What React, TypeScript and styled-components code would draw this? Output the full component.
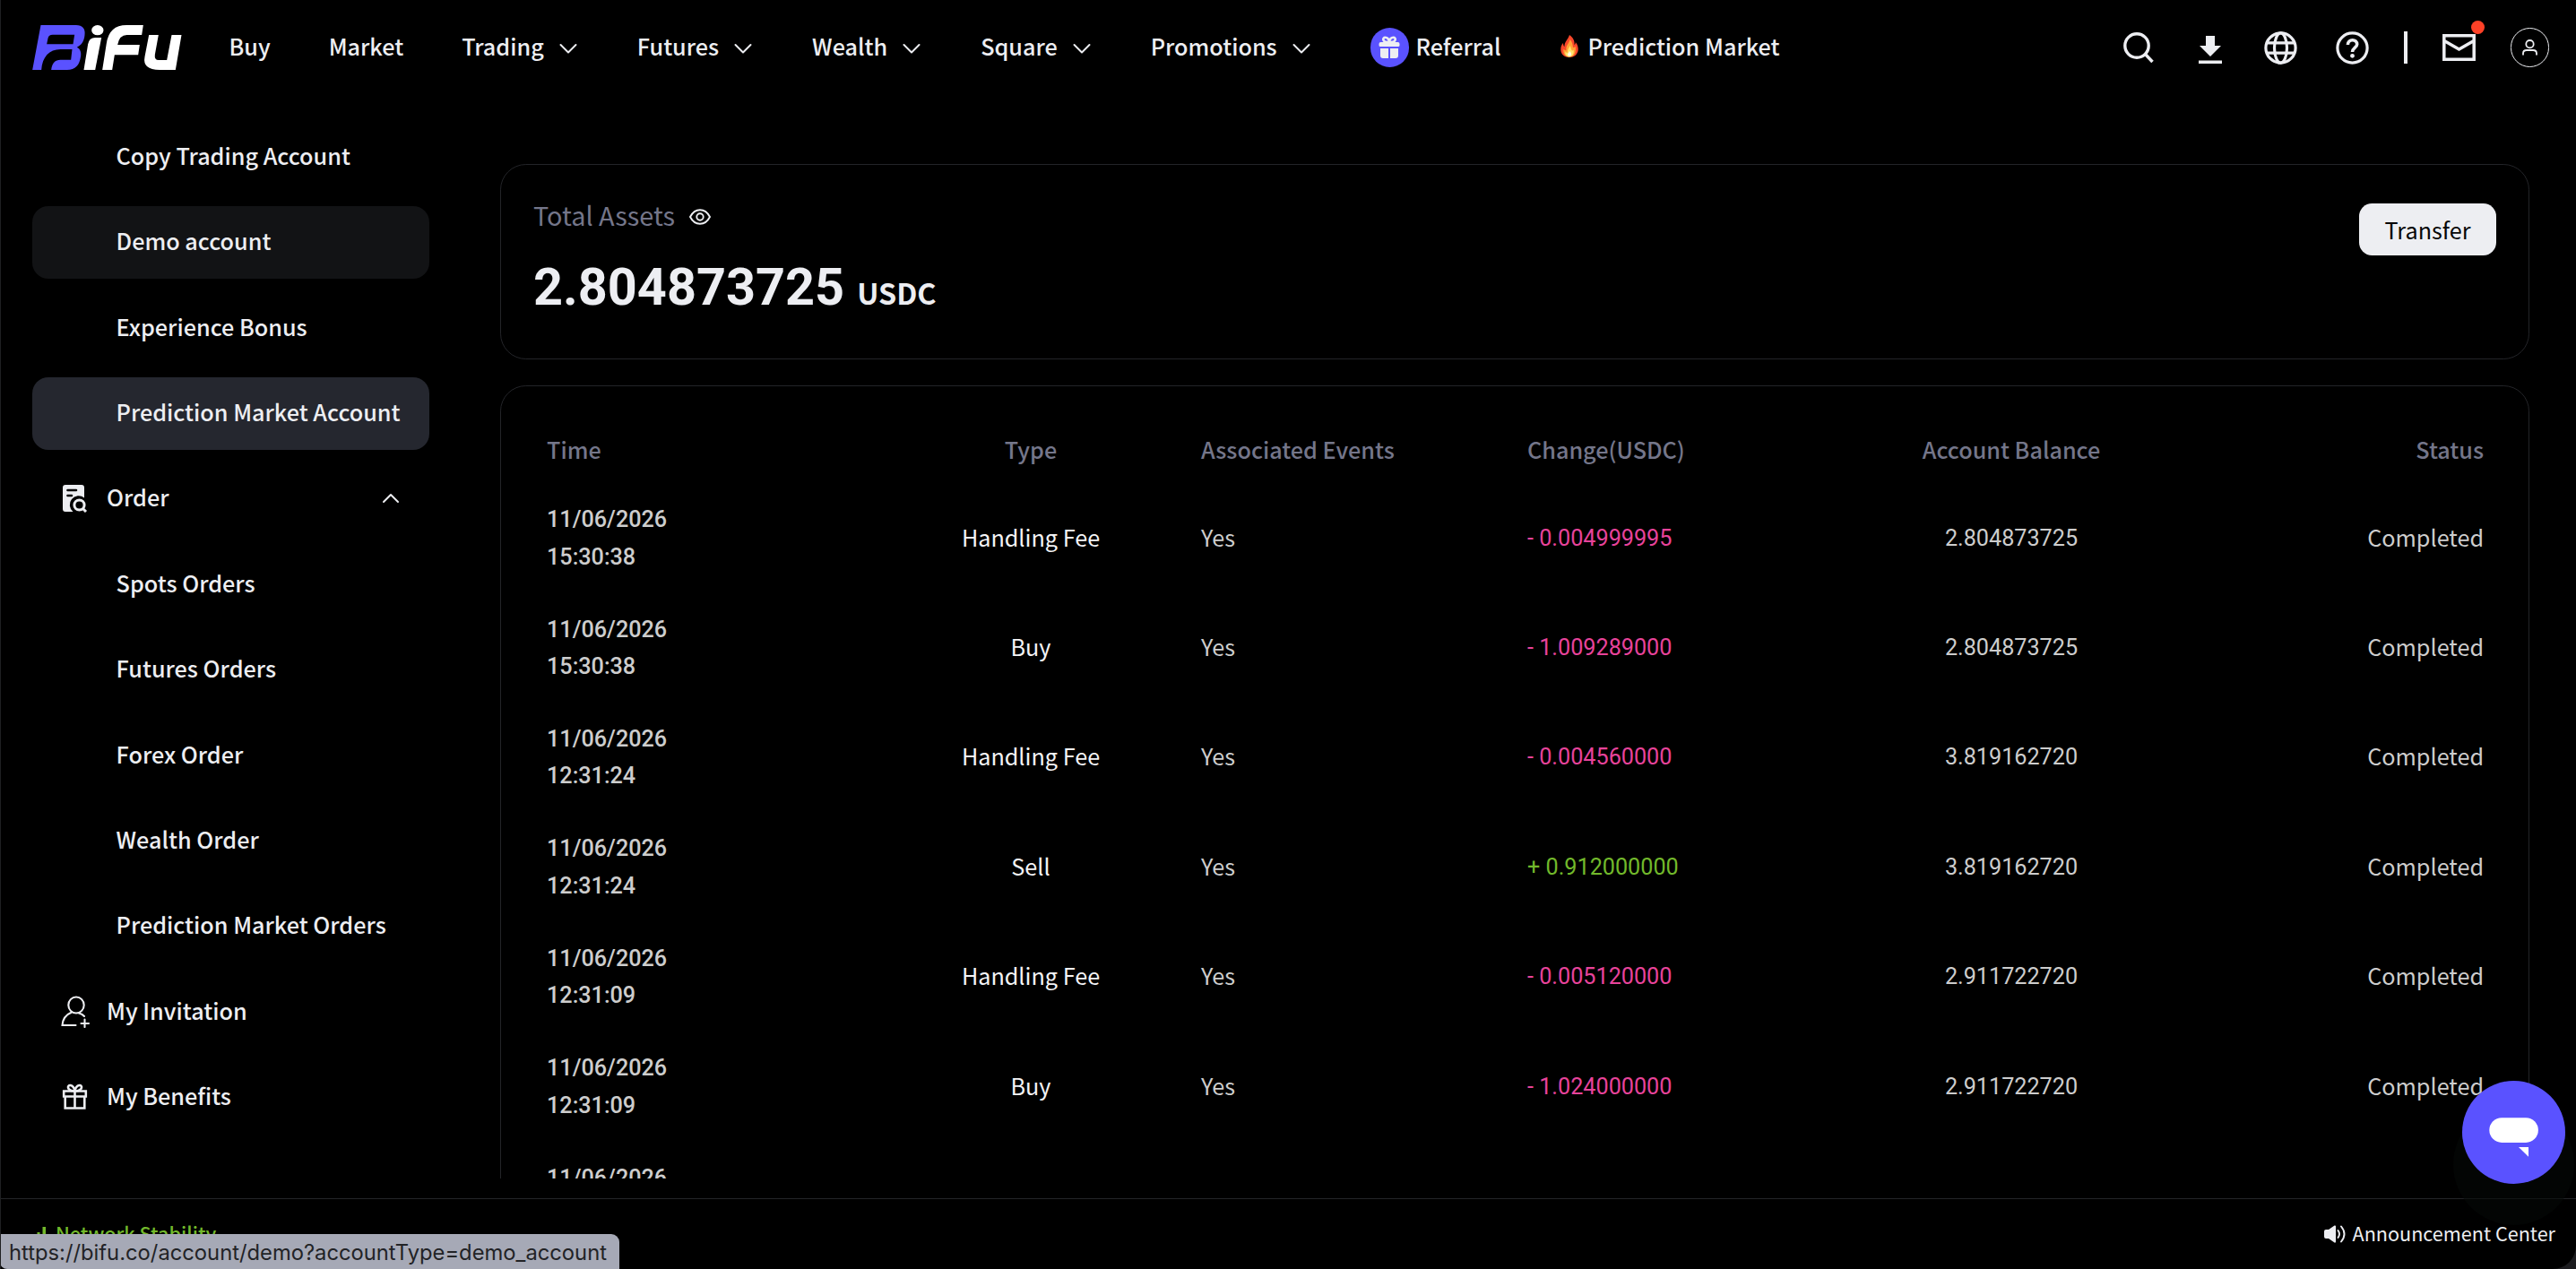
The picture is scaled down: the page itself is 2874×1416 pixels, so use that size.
import React from "react";
import styled, { createGlobalStyle } from "styled-components";

const SANS = `"Noto Sans CJK SC", "Noto Sans", sans-serif`;
const NUM = `Roboto, "Noto Sans", sans-serif`;
const INK = "#edeef2";
const LINE = "#232428";

const Global = createGlobalStyle`
  * { box-sizing: border-box; }
  body { margin: 0; background: #1c1c1f; color: ${INK}; font-family: ${SANS}; font-size: 25.2px; overflow: hidden; }
  svg { display: block; flex: none; }
`;

const Page = styled.div`
  position: relative;
  width: 2874px;
  height: 1416px;
  display: flex;
  flex-direction: column;
  overflow: hidden;
  background: #000;
  border-left: 1px solid #1f2022;
  border-radius: 0 0 26px 0;
`;

const Header = styled.header`
  flex: none;
  height: 106px;
  display: flex;
  align-items: center;
  padding-left: 35px;
`;

const Nav = styled.nav`
  display: flex;
  align-items: center;
  gap: 65px;
  margin-left: 52.5px;
`;

const NavItem = styled.a`
  display: flex;
  align-items: center;
  height: 44px;
  font-weight: 500;
  white-space: nowrap;
`;

const NavText = styled.span`
  line-height: 40px;
  padding-bottom: 5px;
`;

const NavChevron = styled.span`
  margin: 2px 1px 0 16px;
`;

const GiftDisc = styled.span`
  display: grid;
  place-items: center;
  width: 43.2px;
  height: 43.2px;
  margin-right: 7.5px;
  border-radius: 50%;
  background: #5a52ff;
`;

const Flame = styled.span`
  margin: 0 10px 3px 2px;
`;

const Tools = styled.div`
  display: flex;
  align-items: center;
  margin-left: auto;
  margin-right: 30px;
  gap: 36px;
`;

const ToolSlot = styled.span<{ $shift?: number }>`
  position: relative;
  display: grid;
  place-items: center;
  width: 43.2px;
  height: 43.2px;
  padding-top: ${(p) => p.$shift ?? 0}px;
`;

const Divider = styled.span`
  width: 4px;
  height: 36px;
  background: ${INK};
`;

const Dot = styled.span`
  position: absolute;
  right: -7px;
  top: -8px;
  width: 15px;
  height: 15px;
  border-radius: 50%;
  background: #ff4127;
`;

const Avatar = styled(ToolSlot)`
  border: 1px solid ${INK};
  border-radius: 50%;
`;

const Body = styled.div`
  flex: none;
  height: 1209px;
  display: flex;
  overflow: hidden;
`;

const Sidebar = styled.aside`
  flex: none;
  width: 478px;
  display: flex;
  flex-direction: column;
  gap: 14.4px;
  padding: 28.4px 0 0 35px;
`;

const SideItem = styled.a<{ $tone?: string; $group?: boolean }>`
  flex: none;
  height: 81px;
  display: flex;
  align-items: center;
  padding: 0 32px 0 ${(p) => (p.$group ? "32px" : "93.6px")};
  border-radius: 18px;
  background: ${(p) => p.$tone ?? "transparent"};
  font-weight: 500;
  white-space: nowrap;
`;

const SideLabel = styled.span`
  flex: 1;
  line-height: 40px;
  padding-bottom: 4px;
`;

const SideIcon = styled.span`
  width: 51px;
`;

const Main = styled.main`
  width: 2264px;
  margin: 77px 0 0 79px;
  display: flex;
  flex-direction: column;
  gap: 28.8px;
`;

const Card = styled.section`
  border: 1px solid ${LINE};
  border-radius: 28.8px;
`;

const AssetsCard = styled(Card)`
  flex: none;
  height: 218px;
  padding: 35px 36px;
  display: flex;
  justify-content: space-between;
  align-items: flex-start;
`;

const AssetsTitle = styled.div`
  display: flex;
  align-items: center;
  gap: 16px;
  height: 44px;
  color: #74768a;
  font-size: 28.8px;
  line-height: 42px;
`;

const AssetsLabel = styled.span`
  padding-bottom: 2px;
`;

const EyeToggle = styled.span`
  padding-top: 1px;
`;

const Amount = styled.div`
  display: flex;
  align-items: baseline;
  margin-top: 24px;
  font-family: ${NUM};
  font-size: 57.6px;
  font-weight: 700;
  line-height: 68px;
`;

const Unit = styled.span`
  margin-left: 14px;
  font-family: ${SANS};
  font-size: 32.4px;
  font-weight: 600;
  line-height: 40px;
`;

const TransferButton = styled.button`
  width: 153px;
  height: 58px;
  margin-top: 8px;
  padding: 0;
  border: 0;
  border-radius: 14.4px;
  background: ${INK};
  color: #060607;
  font: 400 25.2px/40px ${SANS};
`;

const TableCard = styled(Card)`
  flex: none;
  height: 1100px;
  padding: 36px 50px 36px 51px;
`;

const Row = styled.div<{ $head?: boolean }>`
  display: grid;
  grid-template-columns: 350px 380px 364px 360px 360px 1fr;
  align-items: center;
  height: ${(p) => (p.$head ? "72.6px" : "122.4px")};
  color: ${(p) => (p.$head ? "#74768a" : "#cdcdcd")};
  font-weight: ${(p) => (p.$head ? 500 : 400)};
`;

const Cell = styled.div<{ $align?: string; $color?: string; $num?: boolean }>`
  text-align: ${(p) => p.$align ?? "left"};
  color: ${(p) => p.$color ?? "inherit"};
  font-family: ${(p) => (p.$num ? NUM : SANS)};
  line-height: 40px;
  padding-bottom: ${(p) => (p.$num ? "0" : "4px")};
  white-space: nowrap;
`;

const TimeCell = styled.div`
  font-family: ${NUM};
  font-weight: 500;
  line-height: 41.4px;
`;

const Footer = styled.footer`
  flex: none;
  height: 79px;
  margin-top: 22px;
  padding: 0 23px 0 35px;
  display: flex;
  justify-content: space-between;
  align-items: center;
  border-top: 1px solid ${LINE};
  font-size: 21.6px;
`;

const FootItem = styled.div<{ $green?: boolean }>`
  display: flex;
  align-items: center;
  gap: 8px;
  color: ${(p) => (p.$green ? "#72b92b" : INK)};
  font-weight: ${(p) => (p.$green ? 500 : 400)};
`;

const FootLabel = styled.span`
  padding-bottom: 3px;
  line-height: 32px;
`;

const LinkPreview = styled.div`
  position: absolute;
  left: -1px;
  bottom: 0;
  width: 691px;
  height: 39px;
  padding-left: 10px;
  border-radius: 0 9px 0 8px;
  background: #a6a9b6;
  color: #222326;
  font: 400 23.75px/42px Inter, sans-serif;
  white-space: nowrap;
`;

const Chat = styled.button`
  position: absolute;
  right: 12px;
  bottom: 95px;
  width: 115px;
  height: 115px;
  padding: 0;
  border: 0;
  border-radius: 50%;
  background: #5a52ff;
  box-shadow: 0 36px 0 10px rgba(5, 9, 7, 0.55);
`;

const Logo = () => (
  <svg width="167" height="50" viewBox="18 39 500 150">
    <path fill="#5a52ff" fillRule="evenodd" d="M46 39H164C186 39 196 52 193 72C191 92 184 105 167 113C177 118 182 128 180 142C176 174 162 189 134 189H81C84 165 94 155 112 155H147L151 120H112C74 120 51 146 48 189H18ZM66 103H154L159 71H86Q72 71 70 83Z" />
    <g fill="#fff">
      <ellipse cx="236" cy="56" rx="20" ry="17" />
      <path d="M228 81H249L228 189H190L204 103Q208 81 228 81Z" />
      <path d="M252 189L266 100Q275 39 333 39H389L384 72H334Q309 72 303 105H377L372 139H293L285 189Z" />
      <path d="M408 72H440L428 138Q426 156 440 156H468L484 72H517L497 189H444Q385 189 394 145Z" />
    </g>
  </svg>
);

const Chevron = ({ up }: { up?: boolean }) => (
  <svg width="22" height="14" viewBox="0 0 22 14" fill="none" stroke={INK} strokeWidth="2" strokeLinecap="round" strokeLinejoin="round">
    <path d={up ? "M3 11L11 3L19 11" : "M2.500 3L11 11.500L19.500 3"} />
  </svg>
);

const GiftSolid = () => (
  <svg width="24" height="26" viewBox="0 0 24 26">
    <path fill={INK} d="M2.5 7H21.5Q23.5 7 23.5 9V10.500Q23.500 12 22 12H2Q.5 12 .5 10.500V9Q.5 7 2.500 7ZM2 14H11V25H5Q2 25 2 22ZM13 14H22V22Q22 25 19 25H13Z" />
    <path fill="none" stroke={INK} strokeWidth="2.600" d="M11.500 7C4 7.500 4 1.800 7.500 1.800C10 1.800 11.500 4 12 7C12.500 4 14 1.800 16.500 1.800C20 1.800 20 7.500 12.500 7" />
  </svg>
);

const Fire = () => (
  <svg width="20" height="25" viewBox="0 0 20 25">
    <path fill="#f8472a" d="M10 0C14.500 3 16 7 15.500 11C16.500 10.500 17 9 16.800 8C19 10.500 20 14 19.700 17C19 22 15 25 10 25C4.500 25 .5 21.500 .3 16.500C.2 13 1.500 10.500 3 9C3 11 3.500 12.500 4.500 13C4 8 8.500 5 10 0Z" />
    <path fill="#ffa235" d="M10.500 5C13.500 8 13.500 11 14 14C15 14 16 13.500 16.500 12.500C18 18 16 24.500 10 24.500C5 24.500 2.500 20.500 3.500 15.500C4.500 17 5.500 17.500 6.500 17C5.500 12 9.500 10 10.500 5Z" />
    <path fill="#ffe46b" d="M10.500 12C12 14.500 11.500 16.500 13 17.500C13.800 17.500 14.200 17 14.500 16.500C15.500 20.500 13.500 24.500 10 24.500C6.500 24.500 4.800 22 5.500 18.500C6.500 20 7.500 20 8 19.500C7.500 16.500 9.500 15 10.500 12Z" />
    <path fill="#fffbe8" d="M10.200 18C11.500 19.500 12.500 20.500 12 22.300C11.500 24 8.500 24 8 22.300C7.700 20.800 9.500 19.800 10.200 18Z" />
  </svg>
);

const SearchIcon = () => (
  <svg width="34" height="35" viewBox="0 0 34 35" fill="none" stroke={INK} strokeWidth="3.400">
    <circle cx="15" cy="15" r="13.200" /><path d="M24.500 24.500L32.500 33" />
  </svg>
);
const DownloadIcon = () => (
  <svg width="26" height="31" viewBox="0 0 26 31" fill={INK}>
    <path d="M8 0H18V11H25L13 23L1 11H8ZM0 27.500H26V31H0Z" />
  </svg>
);
const GlobeIcon = () => (
  <svg width="37" height="37" viewBox="0 0 37 37" fill="none" stroke={INK} strokeWidth="3.200">
    <circle cx="18.500" cy="18.500" r="16.600" /><ellipse cx="18.500" cy="18.500" rx="7" ry="16.600" />
    <path d="M3 12.800H34M3 24.200H34" />
  </svg>
);
const HelpIcon = () => (
  <svg width="37" height="37" viewBox="0 0 37 37" fill="none" stroke={INK} strokeWidth="3.200">
    <circle cx="18.500" cy="18.500" r="16.600" />
    <path strokeWidth="3.600" d="M13.400 15C13.400 8 23.800 8 23.700 14.500C23.600 18 18.500 18.300 18.500 23" /><circle cx="18.500" cy="27.300" r="2.400" fill={INK} stroke="none" />
  </svg>
);
const MailIcon = () => (
  <svg width="37" height="30" viewBox="0 0 37 30" fill="none" stroke={INK} strokeWidth="3.500">
    <path d="M1.800 1.800H35.200V28.200H1.800ZM2 7.500L18.500 17L35 7.500" />
  </svg>
);
const UserIcon = () => (
  <svg width="17" height="18" viewBox="0 0 17 18" fill="none" stroke={INK} strokeWidth="1.800">
    <circle cx="8.500" cy="5.200" r="4.200" /><path d="M1 17.500V15.500Q1 12 5 12H12Q16 12 16 15.500V17.500" />
  </svg>
);
const OrderIcon = () => (
  <svg width="30" height="32" viewBox="0 0 30 32">
    <path fill={INK} d="M5 1H23Q26 1 26 4V15.500A9.500 9.500 0 0 0 13.500 31H5Q2 31 2 28V4Q2 1 5 1Z" />
    <path stroke="#000" strokeWidth="2.600" strokeLinecap="round" d="M7.500 7H17M7.500 13H12" />
    <circle cx="20.500" cy="23.500" r="5.600" fill="none" stroke={INK} strokeWidth="3" />
    <path stroke={INK} strokeWidth="3" d="M24 27L28 31" />
  </svg>
);
const InviteIcon = () => (
  <svg width="34" height="36" viewBox="0 0 34 36" fill="none" stroke={INK} strokeWidth="2.100" strokeLinecap="round">
    <ellipse cx="17" cy="10.500" rx="8.700" ry="9" />
    <path d="M12 18.500C6 21 2 26 1.500 33H16.500M20 19.500Q24 20.500 26 23M26.500 26.500V35M22.500 31H31" />
  </svg>
);
const GiftIcon = () => (
  <svg width="30" height="30" viewBox="0 0 30 30" fill="none" stroke={INK} strokeWidth="2.600">
    <path d="M3.200 8.500H27.800V14.500H3.200ZM4.700 14.500V27.500H26.300V14.500M15.500 8.500V27.500" />
    <path d="M15 8.500C6 8 7 1.500 10.500 2C13 2.500 15 5 15.500 8.500C16 5 18 2.500 20.500 2C24 1.500 25 8 16 8.500" />
  </svg>
);
const EyeIcon = () => (
  <svg width="24" height="18" viewBox="0 0 24 18" fill="none" stroke={INK} strokeWidth="1.900">
    <path d="M1 9Q5 1.200 12 1.200T23 9Q19 16.800 12 16.800T1 9Z" /><circle cx="12" cy="9" r="3.700" />
  </svg>
);
const SignalIcon = () => (
  <svg width="18" height="17" viewBox="0 0 18 17" fill="#72b92b">
    <path d="M0 11H3V17H0ZM5.500 6H8.500V17H5.500ZM11.500 0H15V17H11.500Z" />
  </svg>
);
const SpeakerIcon = () => (
  <svg width="24" height="20" viewBox="0 0 24 20">
    <path fill={INK} d="M2 5H5L11.500 .5Q13 0 13 1.500V18.500Q13 20 11.500 19.500L5 15H2Q0 15 0 13V7Q0 5 2 5Z" />
    <path fill="none" stroke={INK} strokeWidth="1.900" strokeLinecap="round" d="M15.500 6Q18.500 10 15.500 14M19 1.500Q26 10 19 18.500" />
  </svg>
);

const NAV = ["Trading", "Futures", "Wealth", "Square", "Promotions"];

const ROWS = [
  ["15:30:38", "Handling Fee", "- 0.004999995", "2.804873725"],
  ["15:30:38", "Buy", "- 1.009289000", "2.804873725"],
  ["12:31:24", "Handling Fee", "- 0.004560000", "3.819162720"],
  ["12:31:24", "Sell", "+ 0.912000000", "3.819162720"],
  ["12:31:09", "Handling Fee", "- 0.005120000", "2.911722720"],
  ["12:31:09", "Buy", "- 1.024000000", "2.911722720"],
];

export default function App() {
  return (
    <>
      <Global />
      <Page>
        <Header>
          <Logo />
          <Nav>
            <NavItem><NavText>Buy</NavText></NavItem>
            <NavItem><NavText>Market</NavText></NavItem>
            {NAV.map((n) => (
              <NavItem key={n}><NavText>{n}</NavText><NavChevron><Chevron /></NavChevron></NavItem>
            ))}
            <NavItem><GiftDisc><GiftSolid /></GiftDisc><NavText>Referral</NavText></NavItem>
            <NavItem><Flame><Fire /></Flame><NavText>Prediction Market</NavText></NavItem>
          </Nav>
          <Tools>
            <ToolSlot><SearchIcon /></ToolSlot>
            <ToolSlot $shift={4}><DownloadIcon /></ToolSlot>
            <ToolSlot><GlobeIcon /></ToolSlot>
            <ToolSlot><HelpIcon /></ToolSlot>
            <Divider />
            <ToolSlot><MailIcon /><Dot /></ToolSlot>
            <Avatar><UserIcon /></Avatar>
          </Tools>
        </Header>
        <Body>
          <Sidebar>
            <SideItem><SideLabel>Copy Trading Account</SideLabel></SideItem>
            <SideItem $tone="#121315"><SideLabel>Demo account</SideLabel></SideItem>
            <SideItem><SideLabel>Experience Bonus</SideLabel></SideItem>
            <SideItem $tone="#25272f"><SideLabel>Prediction Market Account</SideLabel></SideItem>
            <SideItem $group><SideIcon><OrderIcon /></SideIcon><SideLabel>Order</SideLabel><Chevron up /></SideItem>
            <SideItem><SideLabel>Spots Orders</SideLabel></SideItem>
            <SideItem><SideLabel>Futures Orders</SideLabel></SideItem>
            <SideItem><SideLabel>Forex Order</SideLabel></SideItem>
            <SideItem><SideLabel>Wealth Order</SideLabel></SideItem>
            <SideItem><SideLabel>Prediction Market Orders</SideLabel></SideItem>
            <SideItem $group><SideIcon><InviteIcon /></SideIcon><SideLabel>My Invitation</SideLabel></SideItem>
            <SideItem $group><SideIcon><GiftIcon /></SideIcon><SideLabel>My Benefits</SideLabel></SideItem>
          </Sidebar>
          <Main>
            <AssetsCard>
              <div>
                <AssetsTitle><AssetsLabel>Total Assets</AssetsLabel><EyeToggle><EyeIcon /></EyeToggle></AssetsTitle>
                <Amount>2.804873725<Unit>USDC</Unit></Amount>
              </div>
              <TransferButton>Transfer</TransferButton>
            </AssetsCard>
            <TableCard>
              <Row $head>
                <Cell>Time</Cell>
                <Cell $align="center">Type</Cell>
                <Cell>Associated Events</Cell>
                <Cell>Change(USDC)</Cell>
                <Cell $align="center">Account Balance</Cell>
                <Cell $align="right">Status</Cell>
              </Row>
              {ROWS.map(([time, type, change, balance], i) => (
                <Row key={i}>
                  <TimeCell>11/06/2026<br />{time}</TimeCell>
                  <Cell $align="center" $color="#f4f4f6">{type}</Cell>
                  <Cell>Yes</Cell>
                  <Cell $num $color={change[0] === "+" ? "#72b92b" : "#e8439b"}>{change}</Cell>
                  <Cell $num $align="center">{balance}</Cell>
                  <Cell $align="right">Completed</Cell>
                </Row>
              ))}
              <Row>
                <TimeCell>11/06/2026<br />&nbsp;</TimeCell>
              </Row>
            </TableCard>
          </Main>
        </Body>
        <Footer>
          <FootItem $green><SignalIcon /><FootLabel>Network Stability</FootLabel></FootItem>
          <FootItem><SpeakerIcon /><FootLabel>Announcement Center</FootLabel></FootItem>
        </Footer>
        <LinkPreview>https://bifu.co/account/demo?accountType=demo_account</LinkPreview>
        <Chat aria-label="Chat">
          <svg width="115" height="115" viewBox="0 0 115 115" fill="#fff">
            <rect x="30.300" y="41.300" width="54.600" height="27.600" rx="13.800" />
            <path d="M63 74H74V84.800Z" />
          </svg>
        </Chat>
      </Page>
    </>
  );
}
